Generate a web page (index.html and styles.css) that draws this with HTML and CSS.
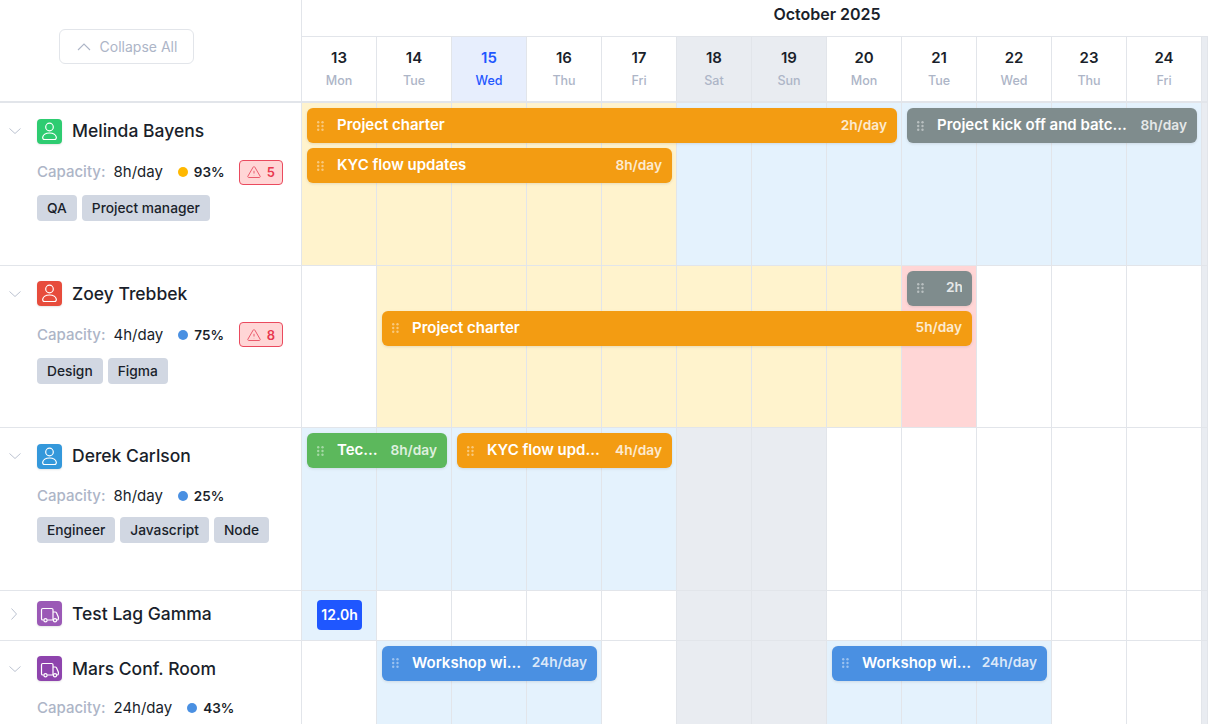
FILE: index.html
```html
<!DOCTYPE html>
<html>
<head>
    <link rel="stylesheet" href="styles.css">
</head>
<body>
<div id="main">
    <svg class="defs" width="0" height="0">
        <symbol id="user" viewBox="0 0 25 25"><circle cx="12.5" cy="8" r="3.800"/><path d="M12.500 14c-3.600 0-6.300 1.800-6.800 4.200-.2 1.200.5 2.300 1.800 2.300h10c1.300 0 2-1.100 1.800-2.300-.5-2.400-3.200-4.200-6.800-4.200z"/></symbol>
        <symbol id="truck" viewBox="0 0 25 25"><path d="M6.800 19H5.800c-.8 0-1.300-.5-1.300-1.300V8.800c0-.8.5-1.300 1.300-1.300h8.900c.8 0 1.300.5 1.300 1.300V19h-5.900"/><path d="M16 11h2.300c.5 0 .9.200 1.200.7l1.900 4.500v1.500c0 .8-.5 1.300-1.300 1.300h-.3M16 19h.3"/><circle cx="8.500" cy="19.300" r="1.600"/><circle cx="18" cy="19.300" r="1.600"/></symbol>
        <symbol id="grip" viewBox="0 0 7 10"><circle cx="1.200" cy="1.200" r="1.200"/><circle cx="5.500" cy="1.200" r="1.200"/><circle cx="1.200" cy="5" r="1.200"/><circle cx="5.500" cy="5" r="1.200"/><circle cx="1.200" cy="8.800" r="1.200"/><circle cx="5.500" cy="8.800" r="1.200"/></symbol>
        <symbol id="warn" viewBox="0 0 14 14"><path d="M6.100 2.200.9 11.200c-.4.700.1 1.300.9 1.300h10.400c.8 0 1.300-.6.900-1.300L7.900 2.200c-.4-.7-1.400-.7-1.800 0z"/><path d="M7 5.800v2.700M7 10.300v.2"/></symbol>
        <symbol id="down" viewBox="0 0 12 12"><path d="M.5 3.500 6 8.500 11.500 3.500"/></symbol>
        <symbol id="right" viewBox="0 0 12 12"><path d="M2.500 .5 7.500 6 2.500 11.500"/></symbol>
        <symbol id="up" viewBox="0 0 14 14"><path d="M1 10 7 4 13 10"/></symbol>
    </svg>

    <div class="head">
        <div class="head-left">
            <div class="collapse-btn"><svg class="up-icon"><use href="#up"/></svg>Collapse All</div>
        </div>
        <div class="head-right">
            <div class="month">October 2025</div>
            <div class="days">
                <div class="day"><b>13</b><span>Mon</span></div>
                <div class="day"><b>14</b><span>Tue</span></div>
                <div class="day today"><b>15</b><span>Wed</span></div>
                <div class="day"><b>16</b><span>Thu</span></div>
                <div class="day"><b>17</b><span>Fri</span></div>
                <div class="day weekend"><b>18</b><span>Sat</span></div>
                <div class="day weekend"><b>19</b><span>Sun</span></div>
                <div class="day"><b>20</b><span>Mon</span></div>
                <div class="day"><b>21</b><span>Tue</span></div>
                <div class="day"><b>22</b><span>Wed</span></div>
                <div class="day"><b>23</b><span>Thu</span></div>
                <div class="day"><b>24</b><span>Fri</span></div>
                <div class="day weekend"></div>
            </div>
        </div>
    </div>

    <div class="row tall">
        <div class="res">
            <div class="res-name">
                <svg class="chev"><use href="#down"/></svg>
                <div class="avatar green"><svg><use href="#user"/></svg></div>
                <span class="name">Melinda Bayens</span>
            </div>
            <div class="cap over">
                <span class="cap-label">Capacity:</span><span class="cap-val">8h/day</span>
                <span class="dot amber"></span><span class="pct">93%</span>
                <span class="alert"><svg><use href="#warn"/></svg>5</span>
            </div>
            <div class="tags"><span class="tag">QA</span><span class="tag">Project manager</span></div>
        </div>
        <div class="cells">
            <div class="cell y"></div><div class="cell y"></div><div class="cell y"></div><div class="cell y"></div><div class="cell y"></div>
            <div class="cell b"></div><div class="cell b"></div><div class="cell b"></div><div class="cell b"></div><div class="cell b"></div><div class="cell b"></div><div class="cell b"></div>
            <div class="cell w"></div>
            <div class="bar orange" style="left:5px;width:590px;top:5px"><svg class="grip"><use href="#grip"/></svg><span class="bar-title">Project charter</span><span class="bar-hrs">2h/day</span></div>
            <div class="bar grey" style="left:605px;width:290px;top:5px"><svg class="grip"><use href="#grip"/></svg><span class="bar-title">Project kick off and batch processing</span><span class="bar-hrs">8h/day</span></div>
            <div class="bar orange" style="left:5px;width:365px;top:45px"><svg class="grip"><use href="#grip"/></svg><span class="bar-title">KYC flow updates</span><span class="bar-hrs">8h/day</span></div>
        </div>
    </div>

    <div class="row tall">
        <div class="res">
            <div class="res-name">
                <svg class="chev"><use href="#down"/></svg>
                <div class="avatar red"><svg><use href="#user"/></svg></div>
                <span class="name">Zoey Trebbek</span>
            </div>
            <div class="cap over">
                <span class="cap-label">Capacity:</span><span class="cap-val">4h/day</span>
                <span class="dot blue"></span><span class="pct">75%</span>
                <span class="alert"><svg><use href="#warn"/></svg>8</span>
            </div>
            <div class="tags"><span class="tag">Design</span><span class="tag">Figma</span></div>
        </div>
        <div class="cells">
            <div class="cell"></div>
            <div class="cell y"></div><div class="cell y"></div><div class="cell y"></div><div class="cell y"></div><div class="cell y"></div><div class="cell y"></div><div class="cell y"></div>
            <div class="cell r"></div>
            <div class="cell"></div><div class="cell"></div><div class="cell"></div>
            <div class="cell w"></div>
            <div class="bar grey" style="left:605px;width:65px;top:5px"><svg class="grip"><use href="#grip"/></svg><span class="bar-title"></span><span class="bar-hrs cut">2h/day</span></div>
            <div class="bar orange" style="left:80px;width:590px;top:45px"><svg class="grip"><use href="#grip"/></svg><span class="bar-title">Project charter</span><span class="bar-hrs">5h/day</span></div>
        </div>
    </div>

    <div class="row tall">
        <div class="res">
            <div class="res-name">
                <svg class="chev"><use href="#down"/></svg>
                <div class="avatar sky"><svg><use href="#user"/></svg></div>
                <span class="name">Derek Carlson</span>
            </div>
            <div class="cap">
                <span class="cap-label">Capacity:</span><span class="cap-val">8h/day</span>
                <span class="dot blue"></span><span class="pct">25%</span>
            </div>
            <div class="tags"><span class="tag">Engineer</span><span class="tag">Javascript</span><span class="tag">Node</span></div>
        </div>
        <div class="cells">
            <div class="cell b"></div><div class="cell b"></div><div class="cell b"></div><div class="cell b"></div><div class="cell b"></div>
            <div class="cell w"></div><div class="cell w"></div>
            <div class="cell"></div><div class="cell"></div><div class="cell"></div><div class="cell"></div><div class="cell"></div>
            <div class="cell w"></div>
            <div class="bar green-bar" style="left:5px;width:140px;top:5px"><svg class="grip"><use href="#grip"/></svg><span class="bar-title">Tech review</span><span class="bar-hrs">8h/day</span></div>
            <div class="bar orange" style="left:155px;width:215px;top:5px"><svg class="grip"><use href="#grip"/></svg><span class="bar-title">KYC flow updates</span><span class="bar-hrs">4h/day</span></div>
        </div>
    </div>

    <div class="row short">
        <div class="res">
            <div class="res-name">
                <svg class="chev"><use href="#right"/></svg>
                <div class="avatar purple"><svg><use href="#truck"/></svg></div>
                <span class="name">Test Lag Gamma</span>
            </div>
        </div>
        <div class="cells">
            <div class="cell b"></div>
            <div class="cell"></div><div class="cell"></div><div class="cell"></div><div class="cell"></div>
            <div class="cell w"></div><div class="cell w"></div>
            <div class="cell"></div><div class="cell"></div><div class="cell"></div><div class="cell"></div><div class="cell"></div>
            <div class="cell w"></div>
            <div class="lag">12.0h</div>
        </div>
    </div>

    <div class="row last">
        <div class="res">
            <div class="res-name">
                <svg class="chev"><use href="#down"/></svg>
                <div class="avatar violet"><svg><use href="#truck"/></svg></div>
                <span class="name">Mars Conf. Room</span>
            </div>
            <div class="cap">
                <span class="cap-label">Capacity:</span><span class="cap-val">24h/day</span>
                <span class="dot blue"></span><span class="pct">43%</span>
            </div>
        </div>
        <div class="cells">
            <div class="cell"></div>
            <div class="cell b"></div><div class="cell b"></div><div class="cell b"></div>
            <div class="cell"></div>
            <div class="cell w"></div><div class="cell w"></div>
            <div class="cell b"></div><div class="cell b"></div><div class="cell b"></div>
            <div class="cell"></div><div class="cell"></div>
            <div class="cell w"></div>
            <div class="bar blue-bar" style="left:80px;width:215px;top:5px"><svg class="grip"><use href="#grip"/></svg><span class="bar-title">Workshop with client</span><span class="bar-hrs">24h/day</span></div>
            <div class="bar blue-bar" style="left:530px;width:215px;top:5px"><svg class="grip"><use href="#grip"/></svg><span class="bar-title">Workshop with client</span><span class="bar-hrs">24h/day</span></div>
        </div>
    </div>
</div>
</body>
</html>
```

FILE: styles.css
```css
* {
    box-sizing: border-box;
}

html, body {
    margin: 0;
    height: 100%;
    overflow: hidden;
}

body {
    font-family: Inter, "Liberation Sans", sans-serif;
    color: #1a1f2b;
    background: #fff;
}

#main {
    width: 1208px;
    height: 724px;
    overflow: hidden;
}

.defs {
    position: absolute;
}

.head {
    display: flex;
    height: 103px;
    border-bottom: 2px solid #e2e5ea;
}

.head-left {
    width: 302px;
    flex: none;
    border-right: 1px solid #e2e5ea;
    padding: 29px 0 0 59px;
}

.collapse-btn {
    width: 135px;
    height: 35px;
    display: flex;
    align-items: center;
    justify-content: center;
    gap: 9px;
    padding-left: 1px;
    border: 1px solid #e2e5ea;
    border-radius: 6px;
    font-size: 14px;
    color: #adb5c7;
}

.up-icon {
    width: 14px;
    height: 14px;
    fill: none;
    stroke: #adb5c7;
    stroke-width: 1.1;
}

.head-right {
    flex: 1;
    min-width: 0;
}

.month {
    height: 37px;
    border-bottom: 1px solid #e2e5ea;
    padding: 5px 0 0 144px;
    text-align: center;
    font-size: 16px;
    font-weight: 600;
    line-height: 19px;
}

.days {
    display: grid;
    grid-template-columns: repeat(12, 75px) 1fr;
    height: 64px;
}

.day {
    border-right: 1px solid #e2e5ea;
    display: flex;
    flex-direction: column;
    align-items: center;
    padding-top: 11px;
}

.day b {
    font-size: 15px;
    font-weight: 600;
    line-height: 20px;
}

.day span {
    font-size: 12.5px;
    font-weight: 500;
    line-height: 16px;
    margin-top: 5px;
    color: #adb5c7;
}

.day.today {
    background: #e7eefd;
}

.day.today b, .day.today span {
    color: #1f57ff;
}

.day.weekend {
    background: #e9ecf1;
}

.row {
    display: flex;
    border-bottom: 1px solid #e2e5ea;
}

.tall {
    height: 162.5px;
}

.short {
    height: 50px;
}

.last {
    height: 200px;
}

.res {
    width: 302px;
    flex: none;
    border-right: 1px solid #e2e5ea;
    padding-top: 15.9px;
}

.short .res {
    padding-top: 10.9px;
}

.res-name {
    display: flex;
    align-items: center;
    height: 25px;
}

.chev {
    width: 12px;
    height: 12px;
    margin: 0 16px 0 9px;
    fill: none;
    stroke: #bcc3d1;
    stroke-width: 1;
}

.avatar {
    width: 25px;
    height: 25px;
    border-radius: 4px;
    margin-right: 10px;
    box-shadow: 0 1px 2px rgba(0, 0, 0, 0.1);
}

.avatar svg {
    display: block;
    width: 25px;
    height: 25px;
    fill: none;
    stroke: #fff;
    stroke-width: 1.2;
}

.green { background: #2ecc71; }
.red { background: #e74c3c; }
.sky { background: #3498db; }
.purple { background: #9b59b6; }
.violet { background: #8e44ad; }

.name {
    margin-top: -1.2px;
    font-size: 17.5px;
    font-weight: 500;
}

.cap {
    display: flex;
    align-items: center;
    height: 22px;
    margin-top: 16px;
    padding: 0 18px 0 37px;
    font-size: 15px;
    line-height: 22px;
}

.cap.over {
    height: 25px;
}

.cap-label {
    color: #adb5c7;
    font-weight: 500;
    margin-right: 8px;
}

.dot {
    width: 10px;
    height: 10px;
    border-radius: 50%;
    margin: 0 6px 0 15px;
}

.dot.amber { background: #ffb800; }
.dot.blue { background: #4a90e2; }

.pct {
    font-size: 13.5px;
    font-weight: 600;
}

.alert {
    display: flex;
    align-items: center;
    gap: 6px;
    height: 25px;
    margin-left: auto;
    padding: 0 7px;
    border: 1px solid #ea4a5e;
    border-radius: 4px;
    background: #ffd6d6;
    color: #e8384f;
    font-size: 13px;
    font-weight: 600;
}

.alert svg {
    width: 14px;
    height: 14px;
    fill: none;
    stroke: #ea5a6c;
    stroke-width: 1;
}

.tags {
    display: flex;
    gap: 5px;
    margin-top: 10.3px;
    padding-left: 37px;
}

.tag {
    height: 26px;
    padding: 0 10px;
    border-radius: 4px;
    background: #d1d7e2;
    font-size: 13.75px;
    font-weight: 500;
    line-height: 26px;
}

.cells {
    flex: 1;
    min-width: 0;
    position: relative;
    display: grid;
    grid-template-columns: repeat(12, 75px) 1fr;
}

.cell {
    border-right: 1px solid #e2e5ea;
}

.cell.y { background: #fff3cd; }
.cell.b { background: #e4f2fd; }
.cell.r { background: #ffd6d6; }
.cell.w { background: #e9ecf1; }

.bar {
    position: absolute;
    height: 35px;
    display: flex;
    align-items: center;
    padding: 0 10px;
    border-radius: 6px;
    color: #fff;
    box-shadow: 0 1px 3px rgba(0, 0, 0, 0.1);
}

.orange { background: #f39c12; }
.grey { background: #7f8c8d; }
.green-bar { background: #5cb85c; }
.blue-bar { background: #4a90e2; }

.grip {
    flex: none;
    width: 7px;
    height: 10px;
    margin-right: 13px;
    fill: rgba(255, 255, 255, 0.45);
}

.bar-title {
    flex: 1;
    min-width: 0;
    margin-top: -2px;
    font-size: 15px;
    font-weight: 600;
    white-space: nowrap;
    overflow: hidden;
    text-overflow: ellipsis;
}

.bar-hrs {
    flex: none;
    margin: -2px 0 0 10px;
    font-size: 13.7px;
    font-weight: 600;
    opacity: 0.8;
}

.bar-hrs.cut {
    flex: 0 0 16px;
    margin-left: 0;
    overflow: hidden;
    white-space: nowrap;
}

.lag {
    position: absolute;
    left: 15px;
    top: 9.5px;
    width: 45px;
    height: 30px;
    border-radius: 4px;
    background: #1f57ff;
    color: #fff;
    font-size: 14px;
    font-weight: 600;
    line-height: 30px;
    text-align: center;
}
```
